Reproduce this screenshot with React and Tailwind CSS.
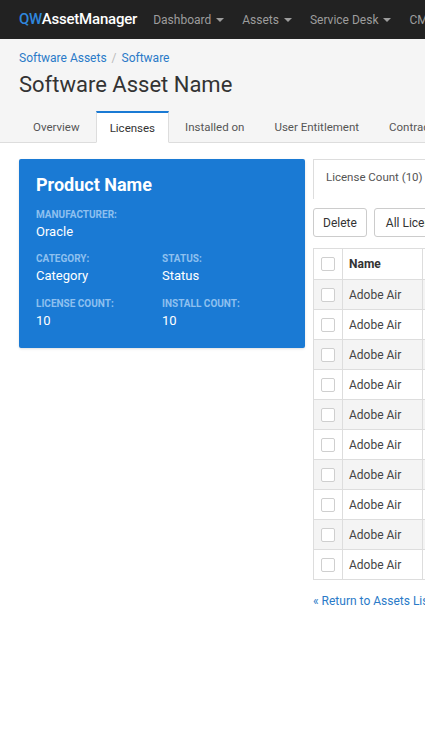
import React from 'react';

const Caret = () => (
  <span className="ml-[5px] inline-block h-0 w-0 border-x-[4px] border-t-[4px] border-x-transparent border-t-[#9d9d9d] align-middle" />
);

const navItems = ['Dashboard', 'Assets', 'Service Desk', 'CMDB', 'Reports'];
const tabs = ['Overview', 'Licenses', 'Installed on', 'User Entitlement', 'Contracts', 'Documents'];
const rows = Array.from({ length: 10 }, () => 'Adobe Air');

const Checkbox = () => (
  <span className="block h-[14px] w-[14px] rounded-[2px] border border-[#cfcfcf] bg-white" />
);

export default function App() {
  return (
    <div className="h-[756px] w-[425px] overflow-hidden bg-white font-['Roboto',sans-serif] text-[#333]">
      <div className="w-[1100px]">
        {/* Navbar */}
        <nav className="flex h-[39px] items-center bg-[#222] pl-[19px]">
          <div className="text-[15px] font-medium tracking-[-0.2px] text-white">
            <span className="text-[#2f86dc]">QW</span>AssetManager
          </div>
          <ul className="ml-[16px] flex text-[12px] text-[#9d9d9d]">
            {navItems.map((item) => (
              <li key={item} className="mr-[18px] flex items-center">
                {item}
                <Caret />
              </li>
            ))}
          </ul>
        </nav>

        {/* Page header */}
        <div className="bg-[#f5f5f5] pt-[11px]">
          <div className="px-[19px]">
            <div className="text-[12px] leading-[16px] text-[#2a7ac8]">
              Software Assets <span className="mx-[2px] text-[#bbb]">/</span> Software
            </div>
            <h1 className="mt-[5px] text-[22px] leading-[28px] text-[#333]">Software Asset Name</h1>
          </div>
          <div className="mt-[12px] flex border-b border-[#ddd] pl-[19px] text-[11.5px] leading-[16px] text-[#555]">
            {tabs.map((t) =>
              t === 'Licenses' ? (
                <div
                  key={t}
                  className="-mb-px mr-[2px] border-x border-b border-t-2 border-x-[#ddd] border-b-white border-t-[#1a7ad4] bg-white px-[13px] pb-[6px] pt-[7px] text-[#333]"
                >
                  {t}
                </div>
              ) : (
                <div key={t} className="mr-[2px] px-[14px] pb-[6px] pt-[8px]">
                  {t}
                </div>
              )
            )}
          </div>
        </div>

        {/* Body */}
        <div className="flex items-start gap-[8px] px-[19px] pt-[16px]">
          <div className="h-[189px] w-[286px] rounded-[2px] bg-[#1a7ad4] px-[17px] pt-[15px] text-white shadow-sm">
            <h2 className="text-[18px] font-bold leading-[22px]">Product Name</h2>
            <div className="mt-[12px]">
              <div className="text-[10px] font-bold uppercase leading-[13px] text-[#8ec0ef]">Manufacturer:</div>
              <div className="mt-[2px] text-[13px] leading-[18px]">Oracle</div>
            </div>
            <div className="mt-[11px] grid grid-cols-2 gap-y-[12px]">
              {[
                ['Category:', 'Category'],
                ['Status:', 'Status'],
                ['License count:', '10'],
                ['Install count:', '10'],
              ].map(([label, value]) => (
                <div key={label}>
                  <div className="text-[10px] font-bold uppercase leading-[13px] text-[#8ec0ef]">{label}</div>
                  <div className="mt-[2px] text-[13px] leading-[18px]">{value}</div>
                </div>
              ))}
            </div>
          </div>

          <div className="w-[600px]">
            <div className="flex">
              <div className="h-[40px] border-x border-t border-[#ddd] px-[12px] pt-[9px] text-[11.5px] leading-[16px] text-[#555]">
                License Count (10)
              </div>
            </div>
            <div className="mt-[9px] flex gap-[7px] text-[12px] text-[#333]">
              <button className="h-[29px] rounded-[3px] border border-[#ccc] bg-white px-[9px]">Delete</button>
              <button className="h-[29px] rounded-[3px] border border-[#ccc] bg-white px-[11px]">All Licenses</button>
            </div>
            <table className="mt-[11px] w-[400px] border-collapse border border-[#ddd] text-[12px]">
              <thead>
                <tr className="h-[31px] bg-white">
                  <th className="w-[28px] border-r border-[#ddd] px-[7px]">
                    <Checkbox />
                  </th>
                  <th className="w-[80px] border-r border-[#ddd] px-[6px] text-left font-bold text-[#333]">Name</th>
                  <th className="border-r border-[#ddd] px-[7px] text-left font-bold">Version</th>
                </tr>
              </thead>
              <tbody>
                {rows.map((name, i) => (
                  <tr key={i} className={`h-[30px] border-t border-[#ddd] ${i % 2 === 0 ? 'bg-[#f4f4f4]' : 'bg-white'}`}>
                    <td className="border-r border-[#ddd] px-[7px]">
                      <Checkbox />
                    </td>
                    <td className="border-r border-[#ddd] px-[6px] text-[#444]">{name}</td>
                    <td className="border-r border-[#ddd] px-[7px]">1.0</td>
                  </tr>
                ))}
              </tbody>
            </table>
            <a href="#" className="mt-[12px] block text-[12px] text-[#2a7ac8]">
              « Return to Assets List
            </a>
          </div>
        </div>
      </div>
    </div>
  );
}
